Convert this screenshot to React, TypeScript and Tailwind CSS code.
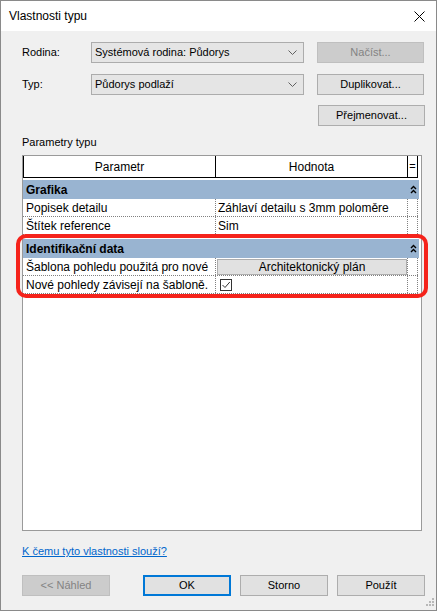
import React from 'react';

const font = { fontFamily: '"Liberation Sans", Arial, sans-serif' };

function Chevron() {
  return (
    <svg width="9" height="5" viewBox="0 0 9 5" className="shrink-0">
      <path d="M0.5 0.5 L4.5 4.5 L8.5 0.5" fill="none" stroke="#606060" strokeWidth="1" />
    </svg>
  );
}

function Combo({ value }: { value: string }) {
  return (
    <div className="w-[213px] h-[21px] border border-[#acacac] bg-[#e5e5e5] flex items-center justify-between pl-[3px] pr-[6px] text-[11px] text-black">
      <span>{value}</span>
      <Chevron />
    </div>
  );
}

function Btn({ label, disabled, primary, w = 'w-[107px]' }: { label: string; disabled?: boolean; primary?: boolean; w?: string }) {
  const cls = disabled
    ? 'bg-[#cccccc] border border-[#bfbfbf] text-[#838383]'
    : primary
      ? 'bg-[#e1e1e1] border-2 border-[#0078d7] text-black'
      : 'bg-[#e1e1e1] border border-[#adadad] text-black';
  return (
    <div className={`${w} h-[21px] flex items-center justify-center text-[11px] ${cls}`}>{label}</div>
  );
}

function Collapse() {
  return (
    <svg width="7" height="9" viewBox="0 0 7 9">
      <path d="M1 4 L3.5 1.5 L6 4" fill="none" stroke="#000" strokeWidth="1.4" />
      <path d="M1 8 L3.5 5.5 L6 8" fill="none" stroke="#000" strokeWidth="1.4" />
    </svg>
  );
}

function GroupRow({ label }: { label: string }) {
  return (
    <div className="h-[19px] bg-[#99b4d1] flex items-center mr-[2px]">
      <div className="w-[385px] pl-[3px] font-bold">{label}</div>
      <div className="w-[10px] flex justify-center">
        <Collapse />
      </div>
    </div>
  );
}

function DataRow({ name, children }: { name: string; children: React.ReactNode }) {
  return (
    <div className="h-[18px] flex border-b border-dotted border-[#808080] mr-[3px]">
      <div className="w-[193px] pl-[3px] border-r border-dotted border-[#808080] flex items-center whitespace-nowrap overflow-hidden">{name}</div>
      <div className="w-[192px] border-r border-dotted border-[#808080] flex items-center">{children}</div>
      <div className="w-[10px] border-r border-dotted border-[#808080]" />
    </div>
  );
}

export default function App() {
  return (
    <div style={font} className="relative w-[437px] h-[611px] border border-[#8a8a8a] bg-[#f0f0f0] flex flex-col text-black">
      {/* title bar */}
      <div className="h-[30px] bg-white flex items-center justify-between pl-[8px] pr-[11px] text-[12px]">
        <span>Vlastnosti typu</span>
        <svg width="11" height="11" viewBox="0 0 11 11">
          <path d="M0.5 0.5 L10.5 10.5 M10.5 0.5 L0.5 10.5" stroke="#000" strokeWidth="1" />
        </svg>
      </div>

      <div className="flex flex-col pl-[21px] pr-[11px] pt-[11px]">
        {/* family / type */}
        <div className="flex items-center h-[21px]">
          <div className="w-[69px] text-[11px]">Rodina:</div>
          <Combo value="Systémová rodina: Půdorys" />
          <div className="ml-[13px]">
            <Btn label="Načíst..." disabled />
          </div>
        </div>
        <div className="flex items-center h-[21px] mt-[11px]">
          <div className="w-[69px] text-[11px]">Typ:</div>
          <Combo value="Půdorys podlaží" />
          <div className="ml-[13px]">
            <Btn label="Duplikovat..." />
          </div>
        </div>
        <div className="flex justify-end h-[21px] mt-[10px]">
          <Btn label="Přejmenovat..." />
        </div>

        <div className="mt-[10px] text-[11px] leading-[13px]">Parametry typu</div>

        {/* property grid */}
        <div className="mt-[6px] w-[400px] h-[376px] border border-[#9a9a9a] bg-white text-[12px] flex flex-col">
          <div className="h-[22px] flex border-b border-black mr-[3px]">
            <div className="w-[193px] border-l border-r border-black flex items-center justify-center">Parametr</div>
            <div className="w-[192px] border-r border-black flex items-center justify-center">Hodnota</div>
            <div className="w-[10px] border-r border-black flex items-center justify-center text-[11px]">=</div>
          </div>
          <div className="pt-[2px] flex flex-col">
            <GroupRow label="Grafika" />
            <DataRow name="Popisek detailu">
              <span className="pl-[2px] whitespace-nowrap">Záhlaví detailu s 3mm poloměre</span>
            </DataRow>
            <DataRow name="Štítek reference">
              <span className="pl-[2px]">Sim</span>
            </DataRow>
            <div className="h-[4px]" />
            <GroupRow label="Identifikační data" />
            <DataRow name="Šablona pohledu použitá pro nové">
              <div className="ml-[1px] w-[190px] h-[16px] bg-[#e1e1e1] border border-[#adadad] flex items-center justify-center">
                Architektonický plán
              </div>
            </DataRow>
            <DataRow name="Nové pohledy závisejí na šabloně.">
              <div className="ml-[4px] w-[12px] h-[12px] border border-[#333] bg-white flex items-center justify-center">
                <svg width="10" height="10" viewBox="0 0 10 10">
                  <path d="M1.5 5 L4 7.5 L8.8 2" fill="none" stroke="#333" strokeWidth="1" />
                </svg>
              </div>
            </DataRow>
          </div>
        </div>

        <div className="mt-[14px] text-[11px] leading-[13px]">
          <span className="text-[#0066cc] underline">K čemu tyto vlastnosti slouží?</span>
        </div>

        {/* dialog buttons */}
        <div className="mt-[17px] flex">
          <Btn label="<< Náhled" disabled w="w-[88px]" />
          <div className="ml-[33px]">
            <Btn label="OK" primary w="w-[88px]" />
          </div>
          <div className="ml-[9px]">
            <Btn label="Storno" w="w-[88px]" />
          </div>
          <div className="ml-[9px]">
            <Btn label="Použít" w="w-[88px]" />
          </div>
        </div>
      </div>

      {/* resize grip */}
      <svg width="10" height="10" viewBox="0 0 10 10" className="absolute right-[2px] bottom-[2px]">
        {[[8, 0], [8, 3], [5, 3], [8, 6], [5, 6], [2, 6]].map(([x, y], i) => (
          <rect key={i} x={x} y={y} width="2" height="2" fill="#b8b8b8" />
        ))}
      </svg>

      {/* red annotation around the identification group */}
      <div className="absolute left-[15px] top-[233px] w-[412px] h-[64px] border-[4px] border-[#f5231b] rounded-[10px] pointer-events-none" />
    </div>
  );
}
